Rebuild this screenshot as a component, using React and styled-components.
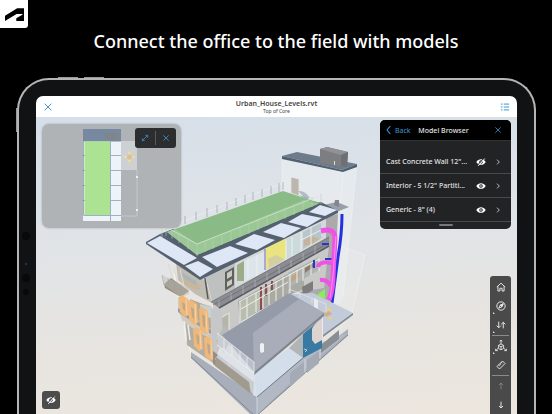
import React from 'react'
import styled, { createGlobalStyle } from 'styled-components'

const GlobalStyle = createGlobalStyle`
  * {
    box-sizing: border-box;
  }
  body {
    margin: 0;
    background: #000;
    font-family: 'Noto Sans', 'Open Sans', sans-serif;
  }
  button {
    font: inherit;
    color: inherit;
    background: none;
    border: 0;
    padding: 0;
  }
  svg {
    display: block;
  }
`

const Page = styled.main`
  height: 100vh;
  display: flex;
  flex-direction: column;
  overflow: hidden;
  background: #000;
`

const Hero = styled.header`
  flex: none;
  display: flex;
  flex-direction: column;
`

const LogoTile = styled.div`
  width: 28px;
  height: 28px;
  background: #fff;
  border-radius: 0 0 3px 0;
`

const Headline = styled.h1`
  margin: 0;
  padding-bottom: 24px;
  color: #fff;
  font-size: 18px;
  font-weight: 500;
  line-height: 26px;
  text-align: center;
`

const Tablet = styled.section`
  position: relative;
  flex: 1;
  min-height: 0;
  display: flex;
  margin: 0 16px 0 17px;
  padding: 16px 17px 0;
  background: #111213;
  border: 2px solid #b5b5b5;
  border-bottom: 0;
  border-radius: 32px 32px 0 0;
`

const SideKey = styled.span`
  position: absolute;
  top: ${props => props.$top}px;
  left: ${props => props.$left}px;
  width: ${props => (props.$upright ? 1 : 20)}px;
  height: ${props => (props.$upright ? 24 : 1)}px;
  background: #9a9a9a;
`

const Sensor = styled.span`
  position: absolute;
  top: ${props => props.$top}px;
  left: ${props => 7 - props.$size / 2}px;
  width: ${props => props.$size}px;
  height: ${props => props.$size}px;
  border-radius: 50%;
  background: ${props => props.$color || '#08090a'};
`

const Screen = styled.div`
  flex: 1;
  min-width: 0;
  display: flex;
  flex-direction: column;
  overflow: hidden;
  background: #fff;
  border-radius: 7px 7px 0 0;
`

const TitleBar = styled.header`
  flex: none;
  display: flex;
  align-items: center;
  justify-content: space-between;
  height: 21px;
  padding: 0 7px;
  color: #3c97d0;
`

const FileTitle = styled.div`
  text-align: center;
  color: #444;
`

const FileName = styled.h2`
  margin: 0;
  font-size: 7px;
  font-weight: 600;
  line-height: 9px;
`

const FileLevel = styled.p`
  margin: 0;
  font-size: 5px;
  line-height: 7px;
`

const Stage = styled.div`
  position: relative;
  flex: 1;
  min-height: 0;
  display: flex;
  justify-content: space-between;
  padding: 0 6px;
  background: linear-gradient(176deg, #d6dfe9 0%, #e1e4e7 42%, #e7e4e0 72%, #ece6de 100%);
`

const Scene = styled.svg`
  position: absolute;
  inset: 0;
  width: 100%;
  height: 100%;
`

const LeftColumn = styled.div`
  position: relative;
  display: flex;
  flex-direction: column;
  justify-content: space-between;
  align-items: flex-start;
  padding: 7px 0 5px;
`

const RightColumn = styled.div`
  position: relative;
  display: flex;
  flex-direction: column;
  align-items: flex-end;
  gap: 47px;
  padding-top: 3px;
`

const MiniMap = styled.section`
  position: relative;
  width: 139px;
  height: 104px;
  background: rgba(166, 168, 171, 0.82);
  border-radius: 7px;
  box-shadow: 0 0 2px rgba(90, 95, 100, 0.5);
`

const MiniMapTools = styled.div`
  position: absolute;
  top: 4px;
  right: 5px;
  display: flex;
  align-items: center;
  width: 41px;
  height: 20px;
  color: #3c97d0;
  background: #2b2d2f;
  border-radius: 3px;
`

const MiniMapButton = styled.button`
  flex: 1;
  display: flex;
  justify-content: center;

  & + & {
    padding: 3px 0;
    border-left: 1px solid #56595c;
  }
`

const HideButton = styled.button`
  display: flex;
  align-items: center;
  justify-content: center;
  width: 18px;
  height: 18px;
  color: #fff;
  background: #4c4c4c;
  border-radius: 3px;
`

const Browser = styled.section`
  flex: none;
  width: 131px;
  color: #e4e4e4;
  background: #222325;
  border-radius: 5px;
  overflow: hidden;
  font-size: 7px;
`

const BrowserHeader = styled.header`
  display: grid;
  grid-template-columns: 1fr auto 1fr;
  align-items: center;
  height: 20px;
  padding: 0 9px 0 5px;
  background: #000;
`

const BackButton = styled.button`
  display: flex;
  align-items: center;
  gap: 2px;
  color: #3c97d0;
`

const BrowserTitle = styled.h3`
  margin: 0;
  font-size: 7px;
  font-weight: 500;
`

const CloseButton = styled.button`
  justify-self: end;
  color: #3c97d0;
`

const ModelList = styled.ul`
  margin: 0;
  padding: 9px 0 0;
  border-top: 1px solid #303133;
  list-style: none;
`

const ModelRow = styled.li`
  display: flex;
  align-items: center;
  height: 24px;
  padding: 0 9px 0 6px;
  border-bottom: 1px solid #48494b;
`

const ModelName = styled.span`
  flex: 1;
  font-weight: 500;
  white-space: nowrap;
`

const RowButton = styled.button`
  display: flex;
  justify-content: ${props => (props.$end ? 'flex-end' : 'center')};
  width: ${props => (props.$end ? 12 : 18)}px;
`

const Grabber = styled.div`
  width: 14px;
  height: 2px;
  margin: 2px auto 3px;
  background: #77787a;
  border-radius: 1px;
`

const Toolbar = styled.nav`
  flex: none;
  width: 21px;
  padding: 1px 0 4px;
  background: #4a4a4a;
  border-radius: 3px;
`

const Tool = styled.button`
  position: relative;
  display: flex;
  align-items: center;
  justify-content: center;
  width: 100%;
  height: 19px;
  color: ${props => (props.$dim ? '#8a8a8a' : '#e4e4e4')};

  &::after {
    content: '';
    display: ${props => (props.$more ? 'block' : 'none')};
    position: absolute;
    left: 3px;
    bottom: 1px;
    border: 1px solid transparent;
    border-left-color: #ddd;
    border-bottom-color: #ddd;
  }
`

const ToolDivider = styled.hr`
  height: 1px;
  margin: 1px 2px 0;
  border: 0;
  background: #8b8b8b;
`

const icons = {
  close: <path d="M2 2l8 8M10 2l-8 8" />,
  list: <path d="M1 2.5h2M4.5 2.5H11M1 6h2M4.5 6H11M1 9.5h2M4.5 9.5H11" />,
  expand: <path d="M2 10l8-8M6.5 2H10v3.5M2 6.5V10h3.5" />,
  back: <path d="M8 0L3 6l5 6" />,
  next: <path d="M4.5 2.5L8 6l-3.5 3.5" />,
  home: <path d="M1 6l5-4.6L11 6M2.3 5v5.8h2.4V7.5h2.6v3.3h2.4V5" />,
  compass: (
    <>
      <circle cx="6" cy="6" r="5" />
      <path d="M8.6 3.4L7 7 3.4 8.6 5 5z" />
      <path d="M8.6 3.4L7 7 5 5z" fill="currentColor" />
    </>
  ),
  levels: <path d="M3.3 2v7M.8 6.8l2.5 2.5 2.5-2.5M8.7 10V3M6.2 5.2l2.5-2.5 2.5 2.5" />,
  explode: (
    <path d="M6 0v4M4.8 1.4L6 0l1.2 1.4M6 4l2.6 1.4v3L6 9.8 3.4 8.4v-3zM3.4 5.4L6 6.8l2.6-1.4M6 6.8v3M3.4 8.2L.6 10.6M8.600 8.200l2.800 2.400M.6 8.800v1.800h2.200M11.400 8.800v1.800H9.200" />
  ),
  measure: (
    <path d="M7.8 1.2l3 3-6.6 6.6-3-3zM6.2 2.8l1.3 1.3M4.7 4.3L6 5.6M3.2 5.8l1.3 1.3" />
  ),
  up: <path d="M6 11V1.5M3 4.5l3-3 3 3" />,
  down: <path d="M6 1v9.5M3 7.5l3 3 3-3" />
}

const Icon = ({ name, size = 8, stroke = 1.2 }) => (
  <svg
    width={size}
    height={size}
    viewBox="0 0 12 12"
    fill="none"
    stroke="currentColor"
    strokeWidth={stroke}
    aria-hidden="true"
  >
    {icons[name]}
  </svg>
)

const EyeIcon = ({ off }) => (
  <svg width="10" height="8" viewBox="0 0 10 8" aria-hidden="true">
    <path d="M.3 4C2.4.2 7.6.2 9.7 4 7.6 7.8 2.4 7.8.3 4z" fill="#fff" />
    <circle cx="5" cy="4" r="1.8" fill="#222325" />
    <circle cx="5" cy="4" r=".8" fill="#fff" />
    {off && (
      <>
        <path d="M1.200 7.600L7.800.2" stroke="#333" strokeWidth="1" />
        <path d="M2.200 7.900L8.800.5" stroke="#fff" strokeWidth=".9" />
      </>
    )}
  </svg>
)

const Logo = () => (
  <svg width="28" height="28" viewBox="0 0 28 28" role="img" aria-label="Autodesk">
    <path d="M5 21l11.600-7.100h5.500c.5 0 .6.500.2.800l-6 3.600V21H24V8.300h-6.800L5 15.800z" />
  </svg>
)

const FloorPlan = () => (
  <svg width="139" height="104" viewBox="42 124 139 104" aria-hidden="true">
    <path d="M121 141h16v29h-16z" fill="#cdd1d3" />
    <path d="M83 141h38v80H83z" fill="#eef3f9" />
    <path d="M83 129h38v12.500H83z" fill="#7789a0" />
    <path d="M105 133h13v6h-13z" fill="#828587" />
    <path d="M84.500 141.500h26v74h-26z" fill="#ace392" />
    <path
      d="M83.500 141v74.500H121M110.500 141v80M110.500 155.500H121M110.500 170.500H121M110.500 185.500H121M110.500 200.500H121"
      stroke="#9fb0c4"
      fill="none"
    />
    <path d="M82.500 155.500h2M82.500 170.500h2M82.500 185.500h2M82.500 200.500h2" stroke="#8293a9" />
    <path d="M121 216h16M137 170v46" stroke="#d0d3d5" strokeWidth=".7" />
    <path d="M136 176h2v2h-2zM136 209h2v2h-2z" fill="#eceff1" />
    <circle cx="129.500" cy="157" r="2.300" fill="#e4bd8b" />
    <g fill="#f4e483">
      <circle cx="129.500" cy="153" r="1.200" />
      <circle cx="129.500" cy="161" r="1.200" />
      <circle cx="125.500" cy="157" r="1.200" />
      <circle cx="133.500" cy="157" r="1.200" />
    </g>
  </svg>
)

// x, y of the upper left corner and height of each shutter on the street side
const shutters = [
  [179, 297, 18],
  [188, 302, 21],
  [199, 309, 23],
  [193, 329, 20],
  [204, 338, 21]
]

const roofPanels = [
  '147,243 160,236 197,258 184,265',
  '185,266 198,261 213,269 200,277',
  '202,257 230,246 248,253 217,267',
  '235,244 254,234 275,240 257,250',
  '263,232 281,223 301,228 284,238',
  '288,222 302,214 322,218 307,227',
  '309,212 320,205 337,210 325,216'
]

const House = () => (
  <Scene viewBox="36 117 481 297" preserveAspectRatio="xMidYMin slice" role="img" aria-label="House model">
    {/* glass volumes behind the house */}
    <path d="M282 158l61 14 14-6-14 131-20 40-41-60z" fill="#eef1f4" opacity=".5" />
    <path d="M338 245l27 10-13 58-24 35z" fill="#eceef0" opacity=".3" />
    <path
      d="M343 172l-3 40M357 166l-14 131M282 158v34M338 245l27 10-13 58"
      stroke="#fff"
      fill="none"
      opacity=".4"
      strokeWidth=".7"
    />
    <path d="M172 262l28 18 14 22 10 70-33-18-14-45z" fill="#e9e5df" opacity=".8" />
    <path d="M174 274l17 80" stroke="#fafafa" strokeWidth=".8" />

    {/* stair tower */}
    <path d="M291 177l8 2v17l-8-3z" fill="#bbb6ae" stroke="#e9e7e2" strokeWidth=".8" />
    <path d="M298 191q7-1 12 7l-4 1z" fill="#b4bac2" />
    <path d="M282 156l15-4 60 12-15 6z" fill="#6d7b8b" />
    <path d="M282 156l60 14 15-6v3l-14 5-61-13z" fill="#515f6f" />
    <path d="M320 149l7-2 21 5-1 15-27-4z" fill="#7d7e82" />
    <path d="M320 149l7-2 21 5-7 3z" fill="#919295" />
    <path d="M341 155l7-3-1 15-6-1z" fill="#6e7074" />
    <path d="M334.500 161v4" stroke="#e5dfd2" />

    {/* side wall */}
    <path d="M323 218l15-4-4 86-24 10-12-20z" fill="#aaaaac" />
    <path d="M323 205l14-3 12 5-15 6z" fill="#999faa" />
    <path d="M334 205l1-5h4v7z" fill="#81868f" />

    {/* upper storey */}
    <path d="M205 274l121-58v25L212 301z" fill="#d5d9da" />
    <path d="M205 274l30-13v27l-23 13z" fill="#bfc0c0" />
    <path d="M225 272l9-5v18l-9 6z" fill="#5f625f" />
    <path d="M227 273l5-3v6l-5 3zM227 282l5-3v5l-5 3z" fill="#c7ccbc" />
    <path d="M237 265l7-4v20l-7 0z" fill="#9cad8a" />
    <path d="M244 261l22-10v20l-22 11z" fill="#dce5e9" />
    <path d="M266 247l20-10v21l-20 11z" fill="#e9e47f" />
    <path d="M268 259l8-4 8 4-3 3-12 6z" fill="#d3cfa0" />
    <path d="M265 249v21" stroke="#8f7ec4" strokeWidth="1.200" />
    <path d="M286 241l15-8v19l-15 8z" fill="#cbdadb" />
    <path d="M303 232l20-10v15l-20 12z" fill="#b8c5ca" />
    <path d="M304 240l8-4 8 3-8 5-8 2z" fill="#c4b49b" />
    <path
      d="M248 259v20M257 255v21M286 240v20M292 237v19M301 232v20M311 227v18M322 222v15M301 240l20-10"
      stroke="#f0f2f2"
      strokeWidth=".9"
      fill="none"
    />
    <path d="M176 263l30 18 6 22-17-9-17-14z" fill="#c2bdb2" />
    <path d="M181 272l15 9 4 9-14-6z" fill="#a8b5bb" />
    <path d="M184 278l10 6 8 2-6 4-12-6z" fill="#c9b698" />
    <path d="M205 278l3 21" stroke="#555a60" strokeWidth="1.500" />
    <path d="M174 268l4 16M180 269l4 17M168 264l5 15" stroke="#dedbd4" />
    <path d="M164 284l7-6 18 13-8 6-16-9z" fill="#91897b" />
    <path d="M162 275l27 13v6l-8 3-17-12z" fill="#c2c0b9" opacity=".5" />
    <path d="M162 275l2 10M168 278l1 9M174 281l1 10M181 284v13" stroke="#9b9c98" strokeWidth=".5" />

    {/* middle storey */}
    <path d="M213 306l116-60-5 42-35 6-66 42-10-12z" fill="#c9c9c8" />
    <path d="M238 301l66-36v24l-15 6-49 28z" fill="#a9aaa1" />
    <path d="M240 303l20-12v19l-20 12z" fill="#b9bdae" />
    <path d="M261 287v23M266 284v12M272 281v9" stroke="#8d4b52" strokeWidth="2" />
    <path d="M288 273l31-16v13l-31 18z" fill="#adb4b2" />
    <path d="M291 277l8-5v5l-8 5z" fill="#c4a47d" />
    <path d="M305 268l8-5v4l-8 6z" fill="#8e7a68" />
    <path
      d="M240 301v22M247 298v20M256 293v19M263 289v19M269 285v20M276 281v20M283 277v20M290 274v19M297 270v13M303 267v14M311 263v12M319 258v13M239 302l80-43M241 322l47-27M241 309l47-27"
      stroke="#edeeed"
      fill="none"
    />
    <path d="M302 287l11-6v9l-10 6z" fill="#7d7d7f" />
    <path d="M221 318l8-5v17l-8 6z" fill="#b5b5aa" stroke="#e7e7e2" />
    <path d="M211 302l118-65v9l-110 62z" fill="#8a8c91" />
    <path d="M211 302l118-65M213 305l116-62" stroke="#6b6e75" strokeWidth=".8" />
    <path d="M219 308l110-62" stroke="#575c65" strokeWidth="1.500" />
    <path
      d="M219 307v-7M231 300v-7M243 294v-8M255 287v-7M267 280v-7M279 274v-8M291 267v-7M303 260v-7M315 254v-8"
      stroke="#bfc0c3"
      strokeWidth=".6"
    />

    {/* service risers */}
    <path d="M342 214q0 20-4 43l-6 46" fill="none" stroke="#2430df" strokeWidth="3" />
    <path d="M322 244h7M325 259h8M314 260v8" fill="none" stroke="#2c35cc" strokeWidth="2" />
    <path d="M321 231c8-2 14-1 14 7l-2 38q0 14-4 24" fill="none" stroke="#f052e6" strokeWidth="5" />
    <path d="M333 264c-6-3-14-2-15 3M320 280q7-1 11 6" fill="none" stroke="#f052e6" strokeWidth="4" />
    <path d="M336 236l-3 40-3 22" fill="none" stroke="#fa9bf2" strokeWidth=".8" />
    <path d="M318 294l7-5v9h-9z" fill="#8cec58" />

    {/* street side */}
    <path d="M178 297l33 9 12 30-8 24-24-16-13-35z" fill="#d0cac0" />
    <path d="M190 299l20 8 1 22-18-12z" fill="#b3a895" />
    <path d="M200 304l11 3v11l-10-2z" fill="#c8d0d2" />
    <path d="M178 308l33 22v4l-33-22z" fill="#9b9c9f" />
    <path d="M186 324l27 17v22l-26-18z" fill="#b0ada5" />
    <path d="M184 321l2 20M188 325l2 15" stroke="#eef0ed" strokeWidth="1.500" />
    {shutters.map(([x, y, h]) => (
      <g key={`${x}-${y}`}>
        <path d={`M${x} ${y}l3-2 6 4 1 ${h - 2}-4 2-5-5z`} fill="#efb87a" />
        <path d={`M${x + 3} ${y + 5}l3 2v${h - 11}l-2-2z`} fill="#b9a98d" />
        <path d={`M${x + 7} ${y + 2}l1 ${h - 2}`} stroke="#f8d3a4" />
      </g>
    ))}
    <path d="M211 308l11 4 1 30-10 20z" fill="#c6c7c9" />
    <path d="M216 341l8-15 10 8-10 19z" fill="#babbb8" />

    {/* base slab */}
    <path d="M191 352l67 45 90-68v6l-91 81h-5l-61-58z" fill="#a9afba" />
    <path d="M191 357l64 59M348 335l-91 80" stroke="#7f8792" fill="none" />
    <path d="M213 351l41 31v13l-41-31z" fill="#958f86" />
    <path d="M229 362v12" stroke="#d5d4cf" />
    <path d="M303 357l20-15 25-9-44 37-46 44-2-17z" fill="#b3b9c4" />
    <path d="M307 360l12-9v12l-12 10zM290 373l14-11v12l-14 13z" fill="#a5abb5" />
    <path d="M321 345l18-15v9l-18 14z" fill="#8a8d91" />
    <path d="M305 359v14M320 346v13M257 397v17" stroke="#dbe0e5" strokeWidth=".7" />

    {/* lower storey */}
    <path d="M255 372l34-24 14 9-46 40-4-2z" fill="#d4deeb" />
    <path d="M257 397l46-39" stroke="#6f7b85" />
    <path d="M223 347l31 24 3 26-13-10-22-19-7-9z" fill="#dbe2e9" opacity=".75" />
    <path d="M216 357l33 25 2 12-36-28z" fill="#a19a8e" />
    <path d="M289 348l14-14v24z" fill="#b2b5b8" />
    <path d="M303 334l19-16v30l-19 10z" fill="#397aa3" />
    <path d="M312 329q1-4 10-11v22l-7 4-3-4z" fill="#dbd4cf" />
    <path d="M304 349l3 1-2 2" stroke="#d9e8ed" fill="none" strokeWidth=".8" />
    <path d="M291 294l22-1 40 20-30 23v-20z" fill="#c3cbd8" />
    <path d="M353 313v2l-30 22v-2" fill="#7d8792" />
    <path d="M314 298l4 2v9l-4-2z" fill="#e8ecee" />
    <path d="M323 313l6-2 3 3-6 3z" fill="#cfae8a" />
    <path d="M318 310l4 1v2l-4-1zM327 307l4 1v3l-4-1zM328 317l4 1v2l-4-1z" fill="#e9d27c" />
    <path d="M222 335l67-42 35 20-70 59z" fill="#969baa" />
    <path d="M253 333l46-34 25 14-70 59z" fill="#a9adb9" />
    <path d="M324 313v3l-70 59v-3z" fill="#80858f" />
    <path d="M260 344q2-2 4 0v8l-3 1-1-2z" fill="#eef1f3" />
    <path d="M217 333l37 29v11l-36-27z" fill="#d2d9e1" opacity=".6" />
    <path
      d="M217 333l37 29M217 345l37 28M224 339v11M232 345v11M240 351v11M247 357v11M254 362v12"
      stroke="#f0f3f5"
      strokeWidth=".7"
      fill="none"
    />
    <path d="M289 289l37 15v9M289 289v5M300 293v5M312 298v5" stroke="#e4e8ea" fill="none" strokeWidth=".7" />

    {/* roof */}
    <path d="M146 242l14-8 38 22 123-54 17 9v2l-138 67-54-36z" fill="#56616f" />
    {roofPanels.map(points => (
      <polygon key={points} points={points} fill="#dee7f5" />
    ))}
    <path d="M160 234l13-5 24 15 107-45 17 4-123 55z" fill="#536070" />
    <path d="M167 232l116-41 37 12-123 52z" fill="#8abb86" />
    <path d="M167 232l8-3 22 15v11z" fill="#9bc797" />
    <path d="M197 244l107-44 14 4-121 51z" fill="#9ac895" />
    <path d="M168 228l29 16 122-48" stroke="#d7e3d4" fill="none" strokeWidth=".8" />
    <path d="M162 229l121-46" stroke="#eef1f2" fill="none" strokeWidth=".6" />
    <path
      d="M162 237v-9M166 236v-8M172 239v-9M179 243v-9M188 249v-9M197 256v-12M205 252v-11M213 249v-11M222 245v-11M231 241v-11M240 237v-11M249 234v-11M258 230v-11M267 226v-11M276 222v-11M285 219v-11M294 215v-11M303 211v-11M312 207v-10M321 204v-10"
      stroke="#c0cbc0"
      strokeWidth=".6"
    />
    <path
      d="M185 224v-8M196 220v-8M207 217v-9M217 213v-8M227 210v-8M236 206v-8M245 203v-8M253 200v-8M262 197v-8M271 194v-8M279 192v-9M283 190v-8"
      stroke="#8e979e"
      strokeWidth=".6"
    />
    <path d="M299 195l10 3-4 1z" fill="#9fb0bd" />
  </Scene>
)

const models = [
  { name: 'Cast Concrete Wall 12"...', hidden: true },
  { name: 'Interior - 5 1/2" Partiti...' },
  { name: 'Generic - 8" (4)' }
]

const ModelBrowser = () => (
  <Browser>
    <BrowserHeader>
      <BackButton>
        <Icon name="back" stroke={1.6} />
        Back
      </BackButton>
      <BrowserTitle>Model Browser</BrowserTitle>
      <CloseButton aria-label="Close model browser">
        <Icon name="close" />
      </CloseButton>
    </BrowserHeader>
    <ModelList>
      {models.map(({ name, hidden }) => (
        <ModelRow key={name}>
          <ModelName>{name}</ModelName>
          <RowButton aria-label={hidden ? 'Show' : 'Hide'}>
            <EyeIcon off={hidden} />
          </RowButton>
          <RowButton $end aria-label="Open">
            <Icon name="next" />
          </RowButton>
        </ModelRow>
      ))}
    </ModelList>
    <Grabber />
  </Browser>
)

const ViewTools = () => (
  <Toolbar aria-label="View tools">
    <Tool aria-label="Home">
      <Icon name="home" size={10} />
    </Tool>
    <Tool $more aria-label="Navigate">
      <Icon name="compass" size={10} />
    </Tool>
    <Tool $more aria-label="Levels">
      <Icon name="levels" size={10} />
    </Tool>
    <ToolDivider />
    <Tool $more aria-label="Explode">
      <Icon name="explode" size={12} stroke={0.9} />
    </Tool>
    <Tool aria-label="Measure">
      <Icon name="measure" size={10} />
    </Tool>
    <ToolDivider />
    <Tool $dim aria-label="Level up">
      <Icon name="up" />
    </Tool>
    <Tool aria-label="Level down">
      <Icon name="down" stroke={1.5} />
    </Tool>
  </Toolbar>
)

const App = () => (
  <Page>
    <GlobalStyle />
    <Hero>
      <LogoTile>
        <Logo />
      </LogoTile>
      <Headline>Connect the office to the field with models</Headline>
    </Hero>
    <Tablet>
      <SideKey $top={-3} $left={39} />
      <SideKey $top={-3} $left={65} />
      <SideKey $top={28} $left={-3} $upright />
      <Sensor $top={152} $size={8} />
      <Sensor $top={183} $size={2} $color="#1d3f78" />
      <Sensor $top={194} $size={8} />
      <Sensor $top={209} $size={6} />
      <Screen>
        <TitleBar>
          <button aria-label="Close model">
            <Icon name="close" size={10} />
          </button>
          <FileTitle>
            <FileName>Urban_House_Levels.rvt</FileName>
            <FileLevel>Top of Core</FileLevel>
          </FileTitle>
          <button aria-label="List">
            <Icon name="list" size={10} />
          </button>
        </TitleBar>
        <Stage>
          <House />
          <LeftColumn>
            <MiniMap>
              <FloorPlan />
              <MiniMapTools>
                <MiniMapButton aria-label="Expand plan">
                  <Icon name="expand" />
                </MiniMapButton>
                <MiniMapButton aria-label="Close plan">
                  <Icon name="close" />
                </MiniMapButton>
              </MiniMapTools>
            </MiniMap>
            <HideButton aria-label="Hidden objects">
              <EyeIcon off />
            </HideButton>
          </LeftColumn>
          <RightColumn>
            <ModelBrowser />
            <ViewTools />
          </RightColumn>
        </Stage>
      </Screen>
    </Tablet>
  </Page>
)

export default App
